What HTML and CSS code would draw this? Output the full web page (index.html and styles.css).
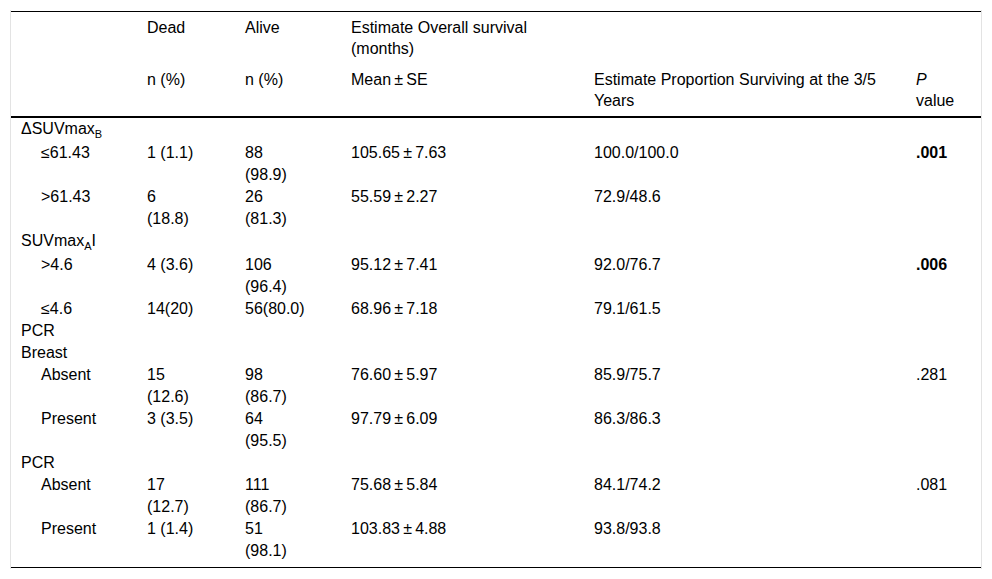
FILE: index.html
```html
<!DOCTYPE html>
<html lang="en">
<head>
<meta charset="utf-8">
<title>Survival table</title>
<link rel="stylesheet" href="styles.css">
</head>
<body>
<div class="frame">
  <table class="data">
    <colgroup>
      <col class="c-label">
      <col class="c-dead">
      <col class="c-alive">
      <col class="c-mean">
      <col class="c-prop">
      <col class="c-p">
    </colgroup>
    <thead>
      <tr class="h1">
        <th></th>
        <th>Dead</th>
        <th>Alive</th>
        <th>Estimate Overall survival (months)</th>
        <th></th>
        <th></th>
      </tr>
      <tr class="h2">
        <th></th>
        <th>n (%)</th>
        <th>n (%)</th>
        <th>Mean&#8201;±&#8201;SE</th>
        <th>Estimate Proportion Surviving at the 3/5 Years</th>
        <th><i>P</i> value</th>
      </tr>
    </thead>
    <tbody>
      <tr class="grp tall">
        <td>ΔSUVmax<sub>B</sub></td><td></td><td></td><td></td><td></td><td></td>
      </tr>
      <tr>
        <td class="ind">≤61.43</td><td>1 (1.1)</td><td>88 (98.9)</td><td>105.65&#8201;±&#8201;7.63</td><td>100.0/100.0</td><td><b>.001</b></td>
      </tr>
      <tr>
        <td class="ind">&gt;61.43</td><td>6 (18.8)</td><td>26 (81.3)</td><td>55.59&#8201;±&#8201;2.27</td><td>72.9/48.6</td><td></td>
      </tr>
      <tr class="grp tall">
        <td>SUVmax<sub>A</sub>I</td><td></td><td></td><td></td><td></td><td></td>
      </tr>
      <tr>
        <td class="ind">&gt;4.6</td><td>4 (3.6)</td><td>106 (96.4)</td><td>95.12&#8201;±&#8201;7.41</td><td>92.0/76.7</td><td><b>.006</b></td>
      </tr>
      <tr>
        <td class="ind">≤4.6</td><td>14(20)</td><td>56(80.0)</td><td>68.96&#8201;±&#8201;7.18</td><td>79.1/61.5</td><td></td>
      </tr>
      <tr class="grp">
        <td>PCR</td><td></td><td></td><td></td><td></td><td></td>
      </tr>
      <tr class="grp">
        <td>Breast</td><td></td><td></td><td></td><td></td><td></td>
      </tr>
      <tr>
        <td class="ind">Absent</td><td>15 (12.6)</td><td>98 (86.7)</td><td>76.60&#8201;±&#8201;5.97</td><td>85.9/75.7</td><td>.281</td>
      </tr>
      <tr>
        <td class="ind">Present</td><td>3 (3.5)</td><td>64 (95.5)</td><td>97.79&#8201;±&#8201;6.09</td><td>86.3/86.3</td><td></td>
      </tr>
      <tr class="grp">
        <td>PCR</td><td></td><td></td><td></td><td></td><td></td>
      </tr>
      <tr>
        <td class="ind">Absent</td><td>17 (12.7)</td><td>111 (86.7)</td><td>75.68&#8201;±&#8201;5.84</td><td>84.1/74.2</td><td>.081</td>
      </tr>
      <tr class="last">
        <td class="ind">Present</td><td>1 (1.4)</td><td>51 (98.1)</td><td>103.83&#8201;±&#8201;4.88</td><td>93.8/93.8</td><td></td>
      </tr>
    </tbody>
  </table>
</div>
</body>
</html>
```

FILE: styles.css
```css
html, body {
  margin: 0;
  padding: 0;
  background: #ffffff;
}

body {
  font-family: "Liberation Sans", Arial, sans-serif;
  font-size: 16px;
  color: #000000;
}

.frame {
  margin: 10px 10px 0 10px;
  width: 970px;
  padding: 1px 0 1px 0;
  border-left: 1px solid #e3e3e3;
  border-right: 1px solid #e3e3e3;
}

.data {
  width: 970px;
  border-collapse: collapse;
  table-layout: fixed;
  border-top: 1px solid #000000;
  border-bottom: 1px solid #000000;
}

.c-label { width: 126px; }
.c-dead  { width: 98px; }
.c-alive { width: 106px; }
.c-mean  { width: 243px; }
.c-prop  { width: 322px; }
.c-p     { width: 75px; }

.data th,
.data td {
  text-align: left;
  vertical-align: top;
  font-weight: normal;
  padding: 0 10px 0 10px;
}

.data thead th {
  line-height: 21px;
  padding-top: 5px;
  padding-bottom: 5px;
}

.data thead tr.h2 th {
  border-bottom: 2px solid #000000;
}

.data td {
  line-height: 22px;
}

.data th:nth-child(2),
.data td:nth-child(2) {
  padding-right: 38px;
}

.data th:nth-child(3),
.data td:nth-child(3) {
  padding-right: 35px;
}

.data th:nth-child(4),
.data td:nth-child(4) {
  padding-right: 20px;
}

.data th:nth-child(6),
.data td:nth-child(6) {
  padding-right: 20px;
}

.data td.ind {
  padding-left: 30px;
}

.data tr.tall td {
  padding-bottom: 2px;
}

.data tr.last td {
  padding-bottom: 5px;
}

.data sub {
  font-size: 11px;
  line-height: 0;
  vertical-align: -4px;
}

.data b {
  font-weight: bold;
}
```
